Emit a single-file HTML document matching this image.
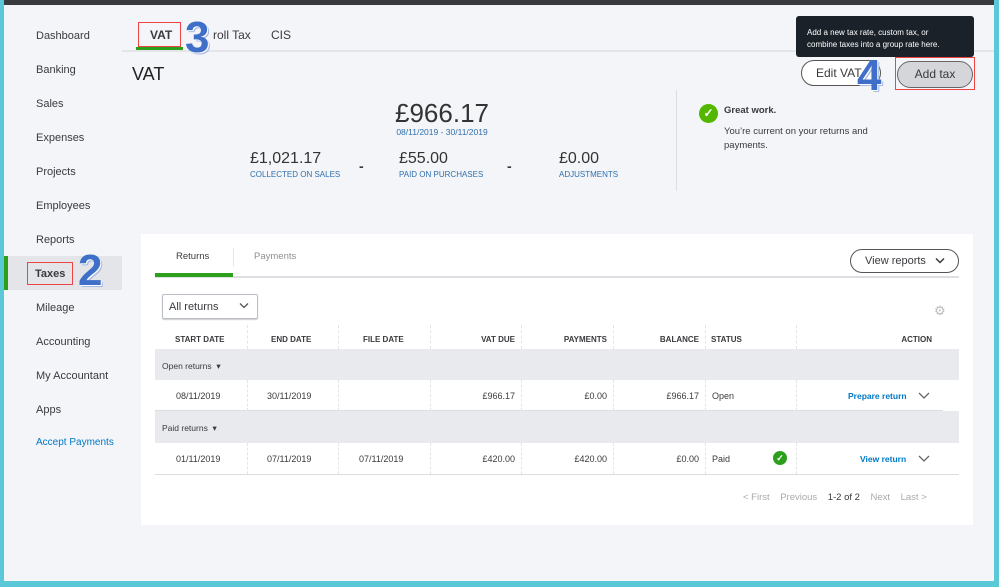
<!DOCTYPE html>
<html><head><style>
*{margin:0;padding:0;box-sizing:border-box}
body{width:999px;height:587px;position:relative;overflow:hidden;background:#f4f5f8;font-family:"Liberation Sans",sans-serif;color:#393a3d}
.a{position:absolute;white-space:nowrap}
.nav{left:36px;font-size:11px;color:#393a3d}
.h{font-size:8px;font-weight:bold;color:#393a3d;top:335px}
.c{font-size:9px;color:#393a3d}
.blue{color:#0077c5}
.vl{position:absolute;width:0;border-left:1px dashed #e3e5e8}
.big{font-family:"Liberation Sans",sans-serif;font-weight:bold;color:#3f6fc8;text-shadow:1px 1px 0 #fff,2px 2px 0 #a8b8e0;font-size:44px}
.chev{position:absolute;width:12px;height:8px}
</style></head><body>
<div class="a" style="left:0;top:0;width:999px;height:5px;background:#393a3d"></div>
<div class="a" style="left:0;top:0;width:4px;height:587px;background:#5bc8d8"></div>
<div class="a" style="left:994px;top:0;width:5px;height:587px;background:#5bc8d8"></div>
<div class="a" style="left:0;top:581px;width:999px;height:6px;background:#5bc8d8"></div>

<!-- sidebar -->
<div class="a" style="left:4px;top:256px;width:118px;height:34px;background:#e3e5e8"></div>
<div class="a" style="left:4px;top:256px;width:4px;height:34px;background:#2ca01c"></div>
<div class="a" style="left:27px;top:262px;width:46px;height:23px;border:1px solid #e44"></div>
<div class="a nav" style="top:30px">Dashboard</div>
<div class="a nav" style="top:64px">Banking</div>
<div class="a nav" style="top:98px">Sales</div>
<div class="a nav" style="top:132px">Expenses</div>
<div class="a nav" style="top:166px">Projects</div>
<div class="a nav" style="top:200px">Employees</div>
<div class="a nav" style="top:234px">Reports</div>
<div class="a nav" style="top:268px;font-weight:bold;left:35px">Taxes</div>
<div class="a nav" style="top:302px">Mileage</div>
<div class="a nav" style="top:336px">Accounting</div>
<div class="a nav" style="top:370px">My Accountant</div>
<div class="a nav" style="top:404px">Apps</div>
<div class="a nav blue" style="top:437px;font-size:10px">Accept Payments</div>
<div class="a big" style="left:78px;top:246px">2</div>

<!-- top tabs -->
<div class="a" style="left:122px;top:50px;width:872px;height:2px;background:#e3e5e8"></div>
<div class="a" style="left:136px;top:47px;width:47px;height:3px;background:#2ca01c"></div>
<div class="a" style="left:138px;top:22px;width:43px;height:25px;border:1px solid #e44"></div>
<div class="a" style="left:150px;top:28px;font-size:12px;font-weight:bold">VAT</div>
<div class="a" style="left:213px;top:28px;font-size:12px">roll Tax</div>
<div class="a" style="left:271px;top:28px;font-size:12px">CIS</div>
<div class="a big" style="left:185px;top:13px">3</div>

<div class="a" style="left:132px;top:64px;font-size:18px;color:#222">VAT</div>

<div class="a" style="left:342px;top:98px;width:200px;text-align:center;font-size:26px;color:#333">£966.17</div>
<div class="a" style="left:342px;top:127px;width:200px;text-align:center;font-size:8.5px;color:#2e6fae">08/11/2019 - 30/11/2019</div>
<div class="a" style="left:250px;top:150px;font-size:16px;color:#333">£1,021.17</div>
<div class="a" style="left:250px;top:170px;font-size:8px;color:#2e6fae">COLLECTED ON SALES</div>
<div class="a" style="left:359px;top:158px;font-size:14px;font-weight:bold">-</div>
<div class="a" style="left:399px;top:150px;font-size:16px;color:#333">£55.00</div>
<div class="a" style="left:399px;top:170px;font-size:8px;color:#2e6fae">PAID ON PURCHASES</div>
<div class="a" style="left:507px;top:158px;font-size:14px;font-weight:bold">-</div>
<div class="a" style="left:559px;top:150px;font-size:16px;color:#333">£0.00</div>
<div class="a" style="left:559px;top:170px;font-size:8px;color:#2e6fae">ADJUSTMENTS</div>

<div class="a" style="left:676px;top:90px;width:1px;height:101px;background:#dcdee2"></div>
<div class="a" style="left:699px;top:104px;width:19px;height:19px;border-radius:50%;background:#53b700;color:#fff;font-size:12px;text-align:center;line-height:19px;font-weight:bold">✓</div>
<div class="a" style="left:724px;top:105px;font-size:9.5px;font-weight:bold">Great work.</div>
<div class="a" style="left:724px;top:125px;font-size:9.5px;line-height:14px">You’re current on your returns and<br>payments.</div>

<div class="a" style="left:801px;top:60px;width:80px;height:26px;border:1px solid #555;border-radius:13px;font-size:12px;padding:5px 0 0 14px;background:#fff">Edit VAT</div>
<div class="a" style="left:895px;top:57px;width:80px;height:33px;border:1px solid #e44"></div>
<div class="a" style="left:897px;top:61px;width:76px;height:27px;border:1px solid #666;border-radius:14px;background:#d4d6da;font-size:12px;text-align:center;line-height:25px">Add tax</div>
<div class="a" style="left:796px;top:16px;width:178px;height:41px;background:#1a2129;border-radius:3px;color:#fff;font-size:8px;line-height:12px;padding:11px 0 0 11px">Add a new tax rate, custom tax, or<br>combine taxes into a group rate here.</div>
<div class="a big" style="left:857px;top:51px">4</div>

<!-- card -->
<div class="a" style="left:141px;top:234px;width:832px;height:291px;background:#fff"></div>
<div class="a" style="left:176px;top:251px;font-size:9.5px">Returns</div>
<div class="a" style="left:254px;top:251px;font-size:9.5px;color:#8d9096">Payments</div>
<div class="a" style="left:233px;top:248px;width:1px;height:18px;background:#e3e5e8"></div>
<div class="a" style="left:155px;top:276px;width:804px;height:2px;background:#dcdee2"></div>
<div class="a" style="left:155px;top:273px;width:78px;height:4px;background:#2ca01c"></div>
<div class="a" style="left:850px;top:249px;width:109px;height:24px;border:1px solid #555;border-radius:12px;font-size:11px;padding:5px 0 0 14px">View reports</div>
<svg class="chev" style="left:934px;top:257px" viewBox="0 0 12 8"><path d="M2 1.5L6 5.5L10 1.5" fill="none" stroke="#393a3d" stroke-width="1.5"/></svg>
<div class="a" style="left:162px;top:294px;width:96px;height:25px;border:1px solid #babec5;border-radius:2px;font-size:11px;padding:6px 0 0 6px;box-shadow:0 1px 1px #ccc">All returns</div>
<svg class="chev" style="left:238px;top:302px" viewBox="0 0 12 8"><path d="M2 1.5L6 5.5L10 1.5" fill="none" stroke="#555" stroke-width="1.3"/></svg>
<div class="a" style="left:934px;top:303px;font-size:13px;color:#bbb">⚙</div>

<div class="a" style="left:155px;top:349px;width:804px;height:31px;background:#e8eaed"></div>
<div class="a" style="left:155px;top:411px;width:804px;height:32px;background:#e8eaed"></div>
<div class="a" style="left:155px;top:410px;width:788px;height:1px;background:#dcdee2"></div>
<div class="a" style="left:155px;top:474px;width:804px;height:1px;background:#dcdee2"></div>
<div class="vl" style="left:247px;top:325px;height:24px"></div><div class="vl" style="left:338px;top:325px;height:24px"></div><div class="vl" style="left:430px;top:325px;height:24px"></div><div class="vl" style="left:521px;top:325px;height:24px"></div><div class="vl" style="left:613px;top:325px;height:24px"></div><div class="vl" style="left:705px;top:325px;height:24px"></div><div class="vl" style="left:796px;top:325px;height:24px"></div>
<div class="vl" style="left:247px;top:380px;height:31px"></div><div class="vl" style="left:338px;top:380px;height:31px"></div><div class="vl" style="left:430px;top:380px;height:31px"></div><div class="vl" style="left:521px;top:380px;height:31px"></div><div class="vl" style="left:613px;top:380px;height:31px"></div><div class="vl" style="left:705px;top:380px;height:31px"></div><div class="vl" style="left:796px;top:380px;height:31px"></div>
<div class="vl" style="left:247px;top:443px;height:31px"></div><div class="vl" style="left:338px;top:443px;height:31px"></div><div class="vl" style="left:430px;top:443px;height:31px"></div><div class="vl" style="left:521px;top:443px;height:31px"></div><div class="vl" style="left:613px;top:443px;height:31px"></div><div class="vl" style="left:705px;top:443px;height:31px"></div><div class="vl" style="left:796px;top:443px;height:31px"></div>

<div class="a h" style="left:175px">START DATE</div>
<div class="a h" style="left:271px">END DATE</div>
<div class="a h" style="left:363px">FILE DATE</div>
<div class="a h" style="left:430px;width:85px;text-align:right">VAT DUE</div>
<div class="a h" style="left:521px;width:86px;text-align:right">PAYMENTS</div>
<div class="a h" style="left:613px;width:86px;text-align:right">BALANCE</div>
<div class="a h" style="left:711px">STATUS</div>
<div class="a h" style="left:796px;width:136px;text-align:right">ACTION</div>

<div class="a c" style="left:162px;top:361px;font-size:8.5px">Open returns &nbsp;▾</div>
<div class="a c" style="left:176px;top:391px">08/11/2019</div>
<div class="a c" style="left:267px;top:391px">30/11/2019</div>
<div class="a c" style="left:430px;top:391px;width:85px;text-align:right">£966.17</div>
<div class="a c" style="left:521px;top:391px;width:86px;text-align:right">£0.00</div>
<div class="a c" style="left:613px;top:391px;width:86px;text-align:right">£966.17</div>
<div class="a c" style="left:712px;top:391px">Open</div>
<div class="a c blue" style="left:848px;top:391px;font-weight:bold;font-size:8.5px">Prepare return</div>
<svg class="chev" style="left:918px;top:392px" viewBox="0 0 12 8"><path d="M1 1L6 6L11 1" fill="none" stroke="#666" stroke-width="1.3"/></svg>

<div class="a c" style="left:162px;top:423px;font-size:8.5px">Paid returns &nbsp;▾</div>
<div class="a c" style="left:176px;top:454px">01/11/2019</div>
<div class="a c" style="left:267px;top:454px">07/11/2019</div>
<div class="a c" style="left:359px;top:454px">07/11/2019</div>
<div class="a c" style="left:430px;top:454px;width:85px;text-align:right">£420.00</div>
<div class="a c" style="left:521px;top:454px;width:86px;text-align:right">£420.00</div>
<div class="a c" style="left:613px;top:454px;width:86px;text-align:right">£0.00</div>
<div class="a c" style="left:712px;top:454px">Paid</div>
<div class="a" style="left:773px;top:451px;width:14px;height:14px;border-radius:50%;background:#2ca01c;color:#fff;font-size:9px;text-align:center;line-height:14px;font-weight:bold">✓</div>
<div class="a c blue" style="left:860px;top:454px;font-weight:bold;font-size:8.5px">View return</div>
<svg class="chev" style="left:918px;top:455px" viewBox="0 0 12 8"><path d="M1 1L6 6L11 1" fill="none" stroke="#666" stroke-width="1.3"/></svg>

<div class="a" style="left:743px;top:492px;font-size:9.5px;color:#aaa">&lt; First &nbsp;&nbsp;&nbsp;Previous &nbsp;&nbsp;&nbsp;<span style="color:#393a3d">1-2 of 2</span> &nbsp;&nbsp;&nbsp;Next &nbsp;&nbsp;&nbsp;Last &gt;</div>
</body></html>
